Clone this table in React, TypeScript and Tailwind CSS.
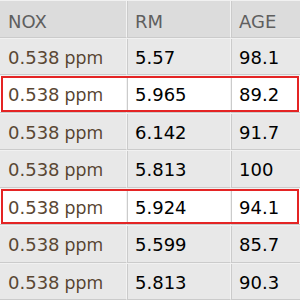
const rows = [
  { nox: '0.538', rm: '5.57', age: '98.1', hl: false },
  { nox: '0.538', rm: '5.965', age: '89.2', hl: true },
  { nox: '0.538', rm: '6.142', age: '91.7', hl: false },
  { nox: '0.538', rm: '5.813', age: '100', hl: false },
  { nox: '0.538', rm: '5.924', age: '94.1', hl: true },
  { nox: '0.538', rm: '5.599', age: '85.7', hl: false },
  { nox: '0.538', rm: '5.813', age: '90.3', hl: false },
]

const cols = 'grid grid-cols-[126px_104px_70px]'
const cell = 'flex items-center pl-2 border-b border-b-[#cbcbcb] border-t border-t-[#f1f1f1]'
const sep = 'border-l border-l-[#f3f3f3] shadow-[inset_1px_0_0_#cbcbcb]'

export default function App() {
  return (
    <div className="w-[300px] h-[300px] overflow-hidden bg-[#e8e8e8] grid grid-rows-[repeat(8,1fr)] font-['DejaVu_Sans',sans-serif] text-[18px]">
      <div className={`${cols} bg-[#dcdcdc] text-[#5f5f5f]`}>
        <div className={`${cell} pt-1.5`}>NOX</div>
        <div className={`${cell} ${sep} pt-1.5`}>RM</div>
        <div className={`${cell} ${sep} pt-1.5`}>AGE</div>
      </div>
      {rows.map((r, i) => (
        <div
          key={i}
          className={`${cols} ${
            r.hl ? 'bg-white outline-2 outline-[#e42424] -outline-offset-3 relative z-10' : ''
          }`}
        >
          <div className={`${cell} pt-0.5 text-[#5a4733]`}>
            {r.nox}
            <span className="ml-[5px] font-['Open_Sans',sans-serif] text-[#54422f]">ppm</span>
          </div>
          <div className={`${cell} ${sep} pt-0.5 text-black`}>{r.rm}</div>
          <div className={`${cell} ${sep} pt-0.5 text-black`}>{r.age}</div>
        </div>
      ))}
    </div>
  )
}
